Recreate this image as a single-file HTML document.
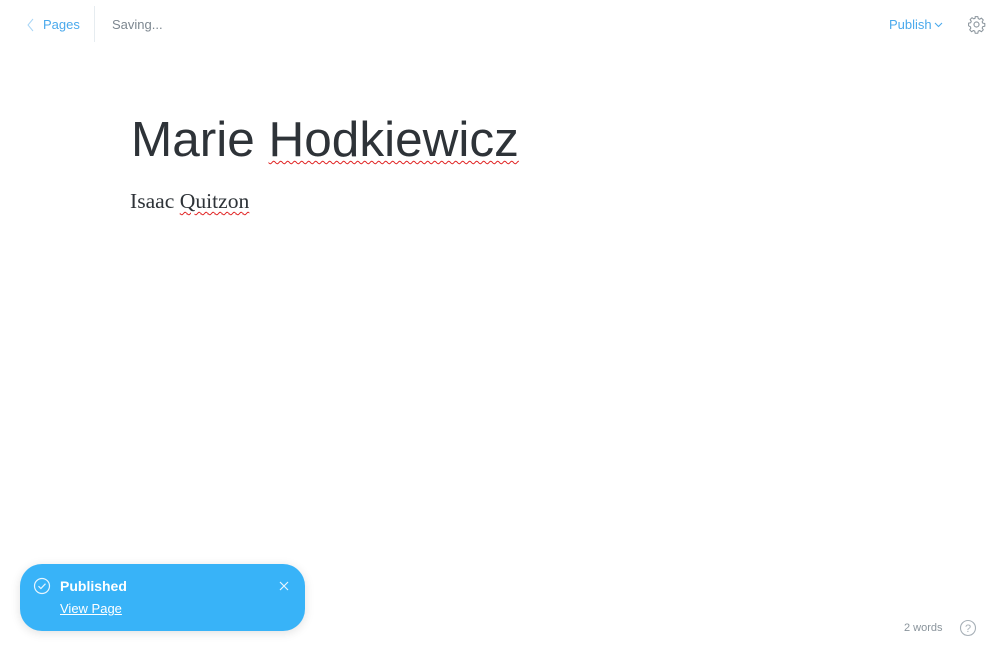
<!DOCTYPE html>
<html><head><meta charset="utf-8"><style>
body{margin:0;width:1000px;height:660px;background:#fff;position:relative;overflow:hidden;font-family:"Liberation Sans",sans-serif}
.a{position:absolute;white-space:nowrap}
.sq{text-decoration:underline wavy #e02020;text-decoration-thickness:1px;text-underline-offset:4px}
</style></head><body>
<svg class="a" style="left:26px;top:18px" width="10" height="14" viewBox="0 0 10 14"><path d="M7 1L2 7l5 6" fill="none" stroke="#a9d6f6" stroke-width="1"/></svg>
<div class="a" style="left:43px;top:17px;font-size:13px;color:#4aa9ec">Pages</div>
<div class="a" style="left:94px;top:6px;width:1px;height:36px;background:#e6ecf0"></div>
<div class="a" style="left:112px;top:17px;font-size:13px;color:#7d8790">Saving...</div>
<div class="a" style="left:889px;top:17px;font-size:13px;color:#4aa9ec">Publish</div>
<svg class="a" style="left:934px;top:22px" width="9" height="6" viewBox="0 0 9 6"><path d="M1 1l3.5 3.5L8 1" fill="none" stroke="#4aa9ec" stroke-width="1.1"/></svg>
<svg class="a" style="left:967px;top:15px" width="19" height="19" viewBox="0 0 24 24"><circle cx="12" cy="12" r="3.2" fill="none" stroke="#8a949c" stroke-width="1.4"/><path d="M10.3 2h3.4l.5 2.6 1.8.8 2.2-1.5 2.4 2.4-1.5 2.2.8 1.8 2.6.5v3.4l-2.6.5-.8 1.8 1.5 2.2-2.4 2.4-2.2-1.5-1.8.8-.5 2.6h-3.4l-.5-2.6-1.8-.8-2.2 1.5-2.4-2.4 1.5-2.2-.8-1.8L2 13.7v-3.4l2.6-.5.8-1.8-1.5-2.2 2.4-2.4 2.2 1.5 1.8-.8z" fill="none" stroke="#8a949c" stroke-width="1.3" stroke-linejoin="round"/></svg>
<div class="a" style="left:131px;top:110px;font-size:49.5px;line-height:60px;color:#2e3338">Marie <span class="sq">Hodkiewicz</span></div>
<div class="a" style="left:130px;top:188px;font-family:'Liberation Serif',serif;font-size:21.6px;line-height:26px;color:#2e3338">Isaac <span class="sq" style="text-underline-offset:3px">Quitzon</span></div>
<div class="a" style="left:20px;top:564px;width:285px;height:67px;border-radius:22px;background:#38b3f8;box-shadow:0 2px 10px rgba(0,0,0,.12)"></div>
<svg class="a" style="left:33px;top:577px" width="18" height="18" viewBox="0 0 18 18"><circle cx="9" cy="9" r="7.5" fill="none" stroke="#e6f5ff" stroke-width="1.2"/><path d="M5.5 9.2l2.4 2.3 4.6-4.8" fill="none" stroke="#e6f5ff" stroke-width="1.2"/></svg>
<div class="a" style="left:60px;top:578px;font-size:14px;font-weight:bold;color:#fff">Published</div>
<div class="a" style="left:60px;top:601px;font-size:13px;color:#fff;text-decoration:underline">View Page</div>
<svg class="a" style="left:279px;top:581px" width="10" height="10" viewBox="0 0 10 10"><path d="M1 1l8 8M9 1l-8 8" stroke="#e6f5ff" stroke-width="1.2"/></svg>
<div class="a" style="left:904px;top:622px;font-size:11px;color:#8a949c">2 words</div>
<svg class="a" style="left:959px;top:619px" width="18" height="18" viewBox="0 0 18 18"><circle cx="9" cy="9" r="7.5" fill="none" stroke="#a8b1b8" stroke-width="1.1"/><text x="9" y="13" text-anchor="middle" font-size="11" font-family="Liberation Sans" fill="#a8b1b8">?</text></svg>
</body></html>
